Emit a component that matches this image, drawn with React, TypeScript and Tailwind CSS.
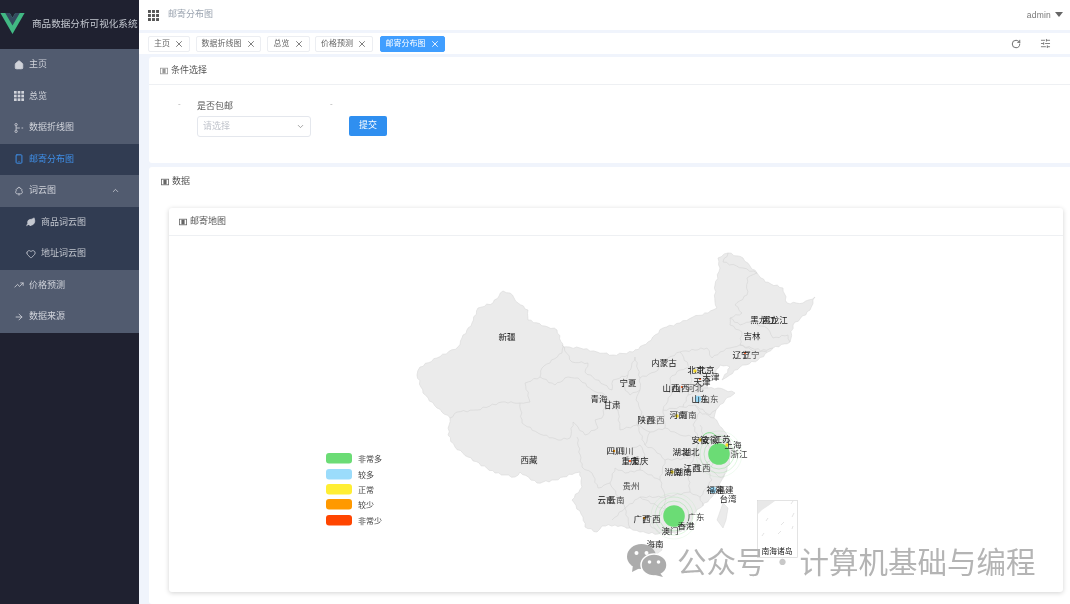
import React from "react";
import { Home, Smartphone, TreeDeciduous, Leaf, Heart, TrendingUp, ArrowRight, ChevronUp, ChevronDown, X, RotateCw, SlidersHorizontal } from "lucide-react";

const Grid = ({ className }: { className?: string }) => (
  <svg viewBox="0 0 12 12" className={className} fill="currentColor">
    {[0, 4.4, 8.8].map((y) => [0, 4.4, 8.8].map((x) => <rect key={x + "-" + y} x={x} y={y} width="3.2" height="3.2" />))}
  </svg>
);
const Branch = ({ className }: { className?: string }) => (
  <svg viewBox="0 0 12 12" className={className} fill="none" stroke="currentColor" strokeWidth="1">
    <circle cx="2.5" cy="2" r="1.4" /><circle cx="2.5" cy="10" r="1.4" /><path d="M2.5 3.4v5.2M2.5 6H7" /><path d="M9 6h2" />
  </svg>
);
const CardIcon = ({ className }: { className?: string }) => (
  <svg viewBox="0 0 10 10" className={className}>
    <rect x="0.5" y="1.5" width="9" height="7" fill="none" stroke="currentColor" strokeWidth="1" />
    <rect x="3" y="2" width="4" height="6" fill="currentColor" />
  </svg>
);

type Item = { label: string; icon: React.ReactNode; active?: boolean; sub?: boolean; open?: boolean };
const ic = "w-[10px] h-[10px] shrink-0";
const items: Item[] = [
  { label: "主页", icon: <Home className={ic} fill="currentColor" /> },
  { label: "总览", icon: <Grid className={ic} /> },
  { label: "数据折线图", icon: <Branch className={ic} /> },
  { label: "邮寄分布图", icon: <Smartphone className={ic} strokeWidth={2.4} />, active: true },
  { label: "词云图", icon: <TreeDeciduous className={ic} />, open: true },
  { label: "商品词云图", icon: <Leaf className={ic} fill="currentColor" />, sub: true },
  { label: "地址词云图", icon: <Heart className={ic} />, sub: true },
  { label: "价格预测", icon: <TrendingUp className={ic} /> },
  { label: "数据来源", icon: <ArrowRight className={ic} /> },
];

const tags = [
  { t: "主页", w: "w-[42px]", m: "" },
  { t: "数据折线图", w: "w-[65px]", m: "ml-[6px]" },
  { t: "总览", w: "w-[43px]", m: "ml-[6px]" },
  { t: "价格预测", w: "w-[58px]", m: "ml-[5px]" },
  { t: "邮寄分布图", w: "w-[65px]", m: "ml-[7px]", on: true },
];

const outline = "417,375 420,367 437,358 458,347 462,338 472,323 478,308 493,303 503,291 510,293 518,303 528,310 528,320 545,326 557,330 563,347 580,348 597,352 613,355 633,352 648,342 663,328 680,323 693,317 708,313 717,308 715,302 715,285 720,268 718,258 728,253 743,258 750,266 757,273 765,282 783,288 787,303 803,303 815,297 810,310 793,325 790,342 773,348 758,360 740,367 727,377 722,380 730,367 720,365 712,378 706,380 708,388 718,388 735,393 725,400 716,410 714,418 722,428 730,440 732,452 727,470 720,483 712,497 700,508 692,515 692,525 678,532 658,534 640,532 630,528 615,525 602,526 597,532 585,527 583,517 572,500 582,487 580,472 575,473 555,480 537,483 520,472 515,477 495,473 468,457 455,447 448,435 450,418 437,408 423,393 417,375";

const lines = [
  "450,418 457,412 477,410 502,402 520,403 530,402 525,383 540,377 542,368 562,353 563,347",
  "520,403 522,423 538,433 558,440 570,438 573,422 585,435 598,428 595,420 602,418 605,407 618,410",
  "577,437 582,467 592,473 598,488 610,483 615,468 625,473 640,470 660,480",
  "540,377 555,385 568,377 578,378 592,390 605,395 618,410 620,430 637,425",
  "562,345 572,362 588,363 585,372 612,390 613,380 628,375 635,357",
  "628,375 622,385 630,395 640,390 640,378 635,357",
  "640,378 655,372 668,358 680,352 707,348 712,358 720,352 730,348 740,345 767,352",
  "640,390 636,400 642,412 637,425 650,432 665,428 663,410 672,392 670,378 680,370 690,368 692,380 688,395 683,407 663,410",
  "680,352 690,368 700,372 706,380",
  "683,407 695,405 700,412 693,425 698,437 680,435 665,428",
  "688,395 705,388 708,388", "695,405 710,415 716,410", "700,412 714,418",
  "700,425 705,440 722,447 730,440",
  "650,432 645,445 655,450 665,460 690,458 697,450 698,437",
  "697,450 695,455 705,465 715,455 705,440", "715,455 710,470 722,478 727,470",
  "695,455 688,470 690,492 700,497 712,480 705,465", "700,497 703,506",
  "665,460 660,480 665,497 690,492",
  "665,497 665,510 650,525 660,533", "665,510 640,497 625,508 630,528", "640,497 665,497",
  "640,470 645,455 640,445 630,450 635,465", "637,425 645,445",
  "610,483 625,508 612,520",
  "728,253 723,262 743,268 757,273 747,278 747,295 735,305 742,313 730,318 740,325 750,322 767,328 773,338 788,335 790,342",
  "730,318 730,325 742,332 740,345 757,352 773,348",
];

// Border lines are wobbled a little, as real map borders are.
const rough = (pts: string, amp = 0.9) => {
  const p = pts.split(" ").map((s) => s.split(",").map(Number));
  const out: string[] = [];
  p.forEach(([x, y], i) => {
    out.push(`${x},${y}`);
    const nx = p[i + 1];
    if (!nx) return;
    const dx = nx[0] - x, dy = nx[1] - y;
    const len = Math.hypot(dx, dy);
    const n = Math.floor(len / 3);
    for (let k = 1; k < n; k++) {
      const t = k / n;
      const w = Math.sin((x + y) * 1.7 + k * 2.3) * amp * Math.min(1, len / 8);
      out.push(`${(x + dx * t - (dy / len) * w).toFixed(1)},${(y + dy * t + (dx / len) * w).toFixed(1)}`);
    }
  });
  return out.join(" ");
};

const Label = ({ x, y, t, dup, c = "#222", o = 0, s = 8.5 }: { x: number; y: number; t: string; dup?: boolean; c?: string; o?: number; s?: number }) => (
  <>
    {dup && <text x={x - 5 - o} y={y} fontSize={s} textAnchor="middle" dominantBaseline="central" fill="#111">{t}</text>}
    <text x={dup ? x + 5 + o : x} y={y} fontSize={s} textAnchor="middle" dominantBaseline="central" fill={c}>{t}</text>
  </>
);

const legend = [
  ["#6bdc75", "非常多", 453],
  ["#9bdcfb", "较多", 469],
  ["#ffee33", "正常", 484],
  ["#ff9900", "较少", 499],
  ["#ff4500", "非常少", 515],
] as const;

const ChinaMap = () => (
  <svg viewBox="169 236 894 356" className="w-full h-full font-['Noto_Sans_CJK_SC',sans-serif]">
    <polygon points={rough(outline)} fill="#ebebeb" stroke="#d9d9d9" strokeWidth="0.6" strokeLinejoin="round" />
    <polygon points="723,503 728,508 726,520 723,528 717,520" fill="#ebebeb" stroke="#d9d9d9" strokeWidth="0.5" />
    <polygon points="648,546 660,543 662,550 654,556 648,553" fill="#ebebeb" stroke="#d9d9d9" strokeWidth="0.5" />
    {lines.map((l) => <polyline key={l} points={rough(l)} fill="none" stroke="#d2d2d2" strokeWidth="0.55" strokeLinejoin="round" />)}

    <rect x="757.5" y="500.5" width="40" height="57" fill="#fff" stroke="#d8d8d8" strokeWidth="0.7" />
    <polygon points="758,501 775,501 768,506 762,510 758,514" fill="#e8e8e8" />
    <path d="M791 504l2-3M794 513l-2 4M768 518l-2 3M784 522l-3 3M764 533l-2 3M781 531l-3 3M793 526l-1 3" stroke="#ddd" strokeWidth="0.8" fill="none" />

    {[[719, 454], [674, 516]].map(([x, y]) => (
      <g key={x}>
        <circle cx={x} cy={y} r="19" fill="none" stroke="#6bdc75" strokeOpacity="0.3" strokeWidth="0.7" />
        <circle cx={x} cy={y} r="15" fill="none" stroke="#6bdc75" strokeOpacity="0.45" strokeWidth="0.7" />
        <circle cx={x} cy={y} r="23" fill="none" stroke="#6bdc75" strokeOpacity="0.15" strokeWidth="0.7" />
        <circle cx={x} cy={y} r="10.8" fill="#6bdc75" />
      </g>
    ))}
    <path d="M703 436a8 8 0 0 1 13 0" fill="none" stroke="#6bdc75" strokeWidth="0.8" />
    <circle cx="698" cy="399" r="3.2" fill="#9bdcfb" />
    <circle cx="713" cy="490" r="3.2" fill="#9bdcfb" />
    {[[695, 371], [677, 416], [700, 440], [727, 445], [672, 472]].map(([x, y]) => <circle key={x} cx={x} cy={y} r="1.7" fill="#f5d824" />)}
    {[[614, 451], [644, 518]].map(([x, y]) => <circle key={x} cx={x} cy={y} r="1.2" fill="#ff9900" />)}
    {[[630, 461], [700, 379], [745, 353], [682, 387]].map(([x, y]) => <circle key={x} cx={x} cy={y} r="1" fill="#ff4500" />)}

    <Label x={507} y={336} t="新疆" />
    <Label x={529} y={459} t="西藏" />
    <Label x={664} y={362} t="内蒙古" />
    <Label x={628} y={382} t="宁夏" />
    <Label x={599} y={398} t="青海" />
    <Label x={612} y={404} t="甘肃" />
    <Label x={769} y={319} t="黑龙江" dup o={1} />
    <Label x={752} y={335} t="吉林" />
    <Label x={746} y={354} t="辽宁" dup c="#444" />
    <Label x={701} y={369} t="北京" dup />
    <Label x={711} y={376} t="天津" />
    <Label x={702} y={381} t="天津" />
    <Label x={676} y={387} t="山西" dup />
    <Label x={695} y={387} t="河北" c="#555" />
    <Label x={705} y={398} t="山东" dup c="#555" />
    <Label x={683} y={414} t="河南" dup c="#444" />
    <Label x={651} y={419} t="陕西" dup c="#555" />
    <Label x={705} y={439} t="安徽" dup />
    <Label x={722} y={438} t="江苏" />
    <Label x={733} y={444} t="上海" />
    <Label x={739} y={453} t="浙江" c="#444" />
    <Label x={620} y={450} t="四川" dup c="#444" />
    <Label x={635} y={460} t="重庆" dup />
    <Label x={686} y={451} t="湖北" dup />
    <Label x={697} y={467} t="江西" dup c="#444" />
    <Label x={678} y={471} t="湖南" dup />
    <Label x={631} y={485} t="贵州" c="#444" />
    <Label x={611} y={499} t="云南" dup c="#444" />
    <Label x={720} y={489} t="福建" dup />
    <Label x={728} y={498} t="台湾" />
    <Label x={647} y={518} t="广西" dup />
    <Label x={696} y={516} t="广东" c="#444" />
    <Label x={686} y={525} t="香港" />
    <Label x={670} y={530} t="澳门" />
    <Label x={655} y={543} t="海南" />
    <Label x={777} y={550} t="南海诸岛" s={7.8} />

    {legend.map(([c, t, y]) => (
      <g key={t}>
        <rect x="326" y={y} width="26" height="10.5" rx="3" fill={c} />
        <text x="358" y={y + 5.2} fontSize="8" dominantBaseline="central" fill="#444">{t}</text>
      </g>
    ))}
  </svg>
);

const WeChat = () => (
  <svg viewBox="0 0 40 33" className="w-[40px] h-[33px]" fill="#acacac">
    <ellipse cx="14.5" cy="12.5" rx="14.5" ry="12.5" />
    <path d="M6 21l-1 7 8-4z" />
    <circle cx="9.5" cy="9" r="2" fill="#fff" /><circle cx="19.5" cy="9" r="2" fill="#fff" />
    <ellipse cx="27" cy="21" rx="13" ry="11" stroke="#fff" strokeWidth="1.5" />
    <path d="M33 29l3 4-8-2z" />
    <circle cx="22.5" cy="18" r="1.8" fill="#fff" /><circle cx="31.5" cy="18" r="1.8" fill="#fff" />
  </svg>
);

const CardHead = ({ t, h, icon }: { t: string; h: string; icon: React.ReactNode }) => (
  <div className={`${h} flex items-center gap-[3px] text-[9px] text-[#555]`}>{icon}<span>{t}</span></div>
);

export default function App() {
  return (
    <div className="flex h-[604px] w-[1070px] overflow-hidden relative blur-[0.35px] font-['Liberation_Sans','Noto_Sans_CJK_SC',sans-serif] bg-[#f0f4fc]">
      <aside className="w-[139px] shrink-0 bg-[#1f2130] flex flex-col">
        <div className="h-[49px] flex items-center">
          <svg viewBox="0 0 261.76 226.69" className="w-[25px] h-[21px] mt-[-2px] shrink-0">
            <path d="M161.096.001l-30.225 52.351L100.647.001H-.005l130.877 226.688L261.749.001z" fill="#41b883" />
            <path d="M161.096.001l-30.225 52.351L100.647.001H52.346l78.526 136.01L209.398.001z" fill="#34495e" />
          </svg>
          <span className="ml-[7px] text-[9.6px] text-[#c4c8d0] whitespace-nowrap">商品数据分析可视化系统</span>
        </div>
        <nav className="flex flex-col">
          {items.map((it) => (
            <div
              key={it.label}
              className={`h-[31.5px] flex items-center text-[9px] ${it.active ? "bg-[#313c52] text-[#3f8fe8]" : it.sub ? "bg-[#313c52] text-[#c4c8d0]" : "bg-[#515b6f] text-[#d0d3da]"} ${it.sub ? "pl-[26px] gap-[5px]" : "pl-[14px] gap-[5px]"}`}
            >
              {it.icon}
              <span>{it.label}</span>
              {it.open && <ChevronUp className="w-[9px] h-[9px] ml-[50px]" />}
            </div>
          ))}
        </nav>
      </aside>

      <main className="flex-1 min-w-0 flex flex-col">
        <header className="h-[30px] shrink-0 bg-white flex items-center pl-[9px] pr-[7px]">
          <Grid className="w-[11px] h-[11px] text-[#555]" />
          <span className="ml-[9px] text-[9px] text-[#9aa3af]">邮寄分布图</span>
          <span className="ml-auto text-[8.5px] text-[#777] tracking-[0.2px]">admin</span>
          <span className="ml-[4px] mb-[2px] w-0 h-0 border-x-[4px] border-x-transparent border-t-[5px] border-t-[#666]" />
        </header>

        <div className="h-[21px] shrink-0 mt-[3px] bg-white flex items-center pl-[9px] pr-[19px]">
          {tags.map((t) => (
            <div
              key={t.t}
              className={`${t.w} ${t.m} h-[16px] flex items-center justify-center gap-[4px] rounded-[2px] border text-[8px] ${t.on ? "bg-[#409eff] border-[#409eff] text-white" : "bg-white border-[#eceef2] text-[#666]"}`}
            >
              <span>{t.t}</span>
              <X className="w-[10px] h-[10px]" />
            </div>
          ))}
          <RotateCw className="ml-auto w-[10px] h-[10px] text-[#555]" />
          <SlidersHorizontal className="ml-[19px] w-[11px] h-[11px] text-[#777]" />
        </div>

        <div className="flex-1 min-h-0 pl-[10px] pt-[3px] flex flex-col gap-[4px] overflow-hidden">
          <section className="h-[106px] shrink-0 bg-white rounded-l-[3px]">
            <div className="border-b border-[#eef0f3] pl-[11px] pt-[1px]">
              <CardHead t="条件选择" h="h-[26px]" icon={<CardIcon className="w-[8px] h-[8px] text-[#999]" />} />
            </div>
            <div className="flex pl-[29px] pt-[15px]">
              <span className="text-[8px] text-[#aaa] w-[19px] leading-[8px]">-</span>
              <div className="w-[114px]">
                <div className="text-[9px] text-[#555] leading-[13px]">是否包邮</div>
                <div className="mt-[3px] h-[21px] border border-[#e4e7ed] rounded-[3px] flex items-center justify-between px-[5px] text-[9px] text-[#c0c4cc]">
                  <span>请选择</span>
                  <ChevronDown className="w-[9px] h-[9px] text-[#888]" />
                </div>
              </div>
              <div className="ml-[19px]">
                <span className="block text-[8px] text-[#aaa] leading-[8px]">-</span>
                <button className="mt-[8px] ml-[19px] block w-[38px] h-[20px] rounded-[2px] bg-[#2f8ff0] text-white text-[9px]">提交</button>
              </div>
            </div>
          </section>

          <section className="flex-1 min-h-0 bg-white rounded-l-[3px] pl-[20px] pr-[7px] flex flex-col">
            <div className="-ml-[8px] pt-[1px]">
              <CardHead t="数据" h="h-[27px]" icon={<CardIcon className="w-[8px] h-[8px] text-[#666]" />} />
            </div>
            <div className="mt-[13px] h-[384px] shrink-0 bg-white rounded-[3px] shadow-[0_1px_5px_rgba(0,0,0,0.18)] flex flex-col">
              <div className="h-[28px] shrink-0 pl-[10px] border-b border-[#eef0f3]">
                <CardHead t="邮寄地图" h="h-[27px]" icon={<CardIcon className="w-[8px] h-[8px] text-[#666]" />} />
              </div>
              <div className="flex-1 min-h-0">
                <ChinaMap />
              </div>
            </div>
          </section>
        </div>
      </main>

      <div className="absolute left-[627px] top-[543px] flex items-center text-[#b4b4b4] font-['Noto_Sans_CJK_SC',sans-serif] text-[29.5px] leading-[34px] whitespace-nowrap">
        <WeChat />
        <span className="ml-[10px]">公众号</span>
        <span className="w-[34px] text-center text-[#c8c8c8]">·</span>
        <span>计算机基础与编程</span>
      </div>
    </div>
  );
}
